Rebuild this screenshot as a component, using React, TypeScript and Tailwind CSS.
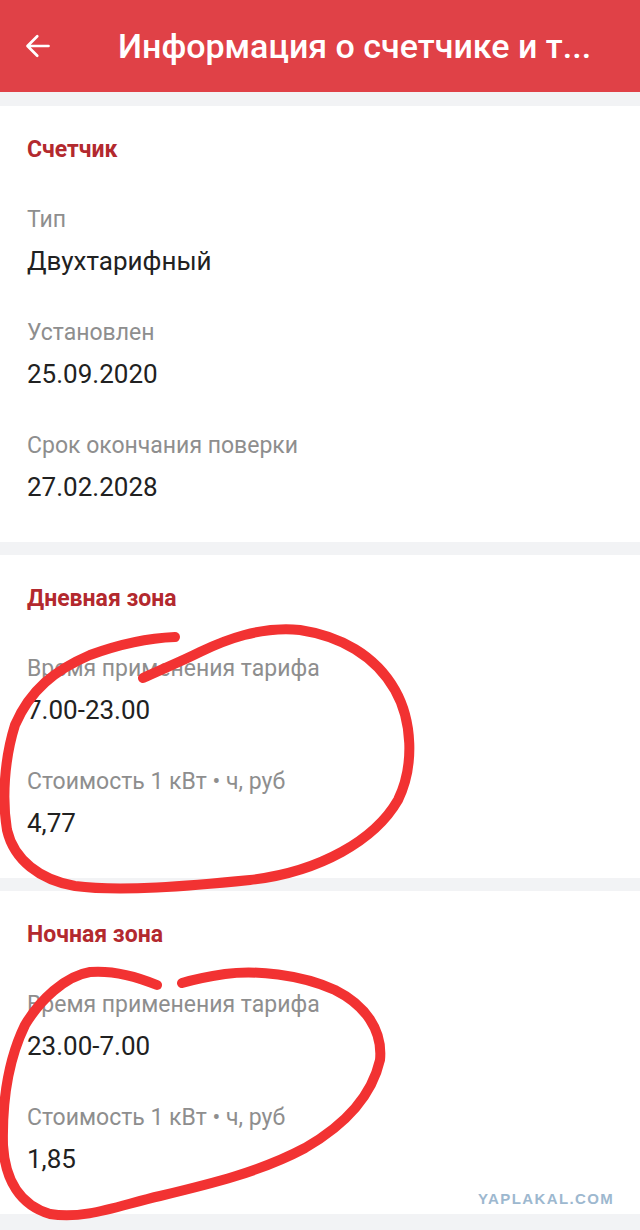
const sections = [
  {
    title: "Счетчик",
    items: [
      { label: "Тип", value: "Двухтарифный" },
      { label: "Установлен", value: "25.09.2020" },
      { label: "Срок окончания поверки", value: "27.02.2028" },
    ],
  },
  {
    title: "Дневная зона",
    items: [
      { label: "Время применения тарифа", value: "7.00-23.00" },
      { label: "Стоимость 1 кВт • ч, руб", value: "4,77" },
    ],
  },
  {
    title: "Ночная зона",
    items: [
      { label: "Время применения тарифа", value: "23.00-7.00" },
      { label: "Стоимость 1 кВт • ч, руб", value: "1,85" },
    ],
  },
];

function BackArrow() {
  return (
    <svg width="36" height="36" viewBox="0 0 24 24" fill="none">
      <path
        d="M19 12H5.5M11.5 5.5L5 12l6.5 6.5"
        stroke="white"
        strokeWidth="1.8"
        strokeLinecap="round"
        strokeLinejoin="round"
      />
    </svg>
  );
}

function Scribbles() {
  return (
    <svg
      className="pointer-events-none absolute left-0 top-0"
      width="640"
      height="1230"
      viewBox="0 0 640 1230"
      fill="none"
    >
      <path
        d="M175 637 C150 638 120 644 90 655 C55 670 30 690 15 725 C4 760 2 800 7 830 C14 860 40 880 75 886 C120 892 190 886 250 880 C320 872 375 840 398 800 C415 765 412 720 395 690 C375 655 340 636 300 630 C260 626 225 640 200 652 C180 662 160 670 143 678"
        stroke="#f23232"
        strokeWidth="10"
        strokeLinecap="round"
        strokeLinejoin="round"
      />
      <path
        d="M157 985 C140 978 115 970 90 972 C65 976 40 1000 25 1025 C8 1060 2 1100 3 1145 C5 1180 20 1205 50 1214 C85 1220 120 1205 160 1196 C210 1184 260 1172 305 1148 C345 1125 372 1095 380 1060 C383 1030 365 1005 335 990 C300 974 255 970 225 974 C205 977 192 980 182 983"
        stroke="#f23232"
        strokeWidth="10"
        strokeLinecap="round"
        strokeLinejoin="round"
      />
    </svg>
  );
}

export default function App() {
  return (
    <div
      className="relative h-[1230px] w-[640px] overflow-hidden bg-[#f2f3f5]"
      style={{ fontFamily: "Roboto, 'Noto Sans', sans-serif" }}
    >
      <header className="flex h-[92px] items-center bg-[#e04147] pl-[20px]">
        <BackArrow />
        <h1 className="ml-[62px] whitespace-nowrap text-[34px] font-medium leading-none text-white">
          Информация о счетчике и т...
        </h1>
      </header>

      <div className="mt-[14px] flex flex-col gap-[13px]">
        {sections.map((section) => (
          <section key={section.title} className="bg-white px-[27px] pb-[39px] pt-[30px]">
            <h2 className="h-[28px] text-[23px] font-bold leading-[28px] text-[#b3292e]">
              {section.title}
            </h2>
            {section.items.map((item) => (
              <div key={item.label + item.value}>
                <p className="mt-[42px] h-[28px] text-[23px] leading-[28px] text-[#8e8e8e]">
                  {item.label}
                </p>
                <p className="mt-[11px] h-[32px] text-[26px] leading-[32px] text-[#212121]">
                  {item.value}
                </p>
              </div>
            ))}
          </section>
        ))}
      </div>

      <Scribbles />

      <div
        className="absolute left-[478px] top-[1190px] text-[15px] font-black leading-[18px] tracking-[1.4px] text-[#9db8cf]"
        style={{ fontFamily: "'Liberation Sans', Arial, sans-serif" }}
      >
        YAPLAKAL.COM
      </div>
    </div>
  );
}
